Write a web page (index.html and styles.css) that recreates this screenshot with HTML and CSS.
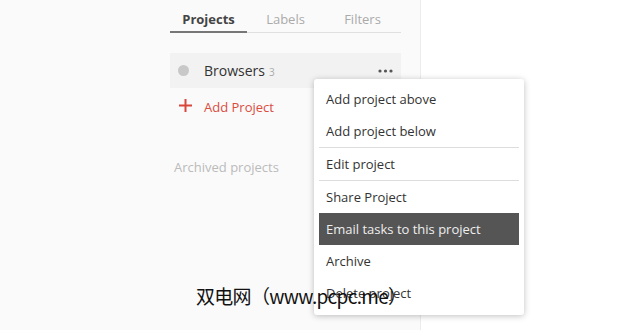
FILE: index.html
```html
<!DOCTYPE html>
<html lang="en">
  <head>
    <meta charset="UTF-8" />
    <meta name="viewport" content="width=device-width, initial-scale=1.0" />
    <title>Projects</title>
    <link rel="stylesheet" href="styles.css">
  </head>
  <body>
    <div class="page">
      <aside class="sidebar">
        <nav class="tabs">
          <span class="tab active">Projects</span>
          <span class="tab">Labels</span>
          <span class="tab">Filters</span>
        </nav>
        <ul class="projects">
          <li class="project">
            <span class="dot"></span>
            <span class="name">Browsers</span>
            <span class="count">3</span>
            <svg class="more" width="15" height="4" viewBox="0 0 15 4">
              <circle cx="2" cy="2" r="1.6" fill="#555"/>
              <circle cx="7.5" cy="2" r="1.6" fill="#555"/>
              <circle cx="13" cy="2" r="1.6" fill="#555"/>
            </svg>
          </li>
        </ul>
        <div class="add">
          <svg class="plus" width="13" height="13" viewBox="0 0 13 13">
            <path d="M6.5 0v13M0 6.5h13" stroke="#d9473a" stroke-width="2" fill="none"/>
          </svg>
          <span>Add Project</span>
        </div>
        <div class="archived">Archived projects</div>
      </aside>
      <main class="content"></main>
    </div>

    <!-- context menu of the project row -->
    <ul class="menu">
      <li>Add project above</li>
      <li>Add project below</li>
      <li class="sep"></li>
      <li>Edit project</li>
      <li class="sep"></li>
      <li>Share Project</li>
      <li class="hover">Email tasks to this project</li>
      <li>Archive</li>
      <li>Delete project</li>
    </ul>

    <div class="watermark">双电网（www.pcpc.me）</div>
  </body>
</html>
```

FILE: styles.css
```css
html, body {
  margin: 0;
  height: 100%;
}
body {
  font-family: "Open Sans", "Liberation Sans", sans-serif;
  color: #333;
  background: #fff;
  overflow: hidden;
}

.page {
  display: flex;
  height: 100%;
}

.sidebar {
  width: 421px;
  flex: none;
  background-color: #fafafa;
  border-right: 1px solid #ececec;
  padding-left: 170px;
  box-sizing: border-box;
}

.tabs {
  display: flex;
  width: 231px;
  margin-top: 10px;
  border-bottom: 1px solid #e0e0e0;
}
.tab {
  flex: 1;
  text-align: center;
  font-size: 13px;
  color: #aaa;
  padding-bottom: 3px;
  line-height: 18px;
}
.tab.active {
  color: #444;
  font-weight: 700;
  border-bottom: 2px solid #777;
  margin-bottom: -1px;
}

.projects {
  list-style: none;
  margin: 20px 0 0;
  padding: 0;
  width: 231px;
}
.project {
  display: flex;
  align-items: center;
  height: 35px;
  background-color: #f2f2f2;
  padding-left: 8px;
  padding-right: 8px;
}
.dot {
  width: 11px;
  height: 11px;
  border-radius: 50%;
  background-color: #c8c8c8;
  margin-right: 15px;
}
.name {
  font-size: 14px;
  color: #333;
  margin-top: -1px;
}
.count {
  font-size: 10px;
  color: #aaa;
  margin-left: 4px;
  margin-top: 3px;
}
.more {
  margin-left: auto;
}

.add {
  display: flex;
  align-items: center;
  height: 36px;
  padding-left: 9px;
  color: #db4c3f;
  font-size: 13px;
}
.plus {
  margin-right: 12px;
  margin-top: -2px;
}
.add span {
  margin-top: 1px;
}

.archived {
  margin-top: 34px;
  padding-left: 4px;
  font-size: 13px;
  color: #bbb;
}

.content {
  flex: 1;
}

.menu {
  position: absolute;
  left: 314px;
  top: 79px;
  width: 210px;
  margin: 0;
  padding: 4px 5px 6px;
  box-sizing: border-box;
  list-style: none;
  background: #fff;
  border-radius: 3px;
  box-shadow: 0 1px 6px rgba(0, 0, 0, 0.25);
}
.menu li {
  height: 32px;
  line-height: 33px;
  padding-left: 7px;
  font-size: 13px;
  color: #333;
}
.menu li.sep {
  height: 1px;
  background: #ddd;
  padding: 0;
}
.menu li.hover {
  background: #555;
  color: #eee;
}

.watermark {
  position: absolute;
  left: 196px;
  top: 282px;
  font-family: "Noto Sans CJK SC", sans-serif;
  font-size: 19px;
  color: #111;
  letter-spacing: -0.7px;
}
```
